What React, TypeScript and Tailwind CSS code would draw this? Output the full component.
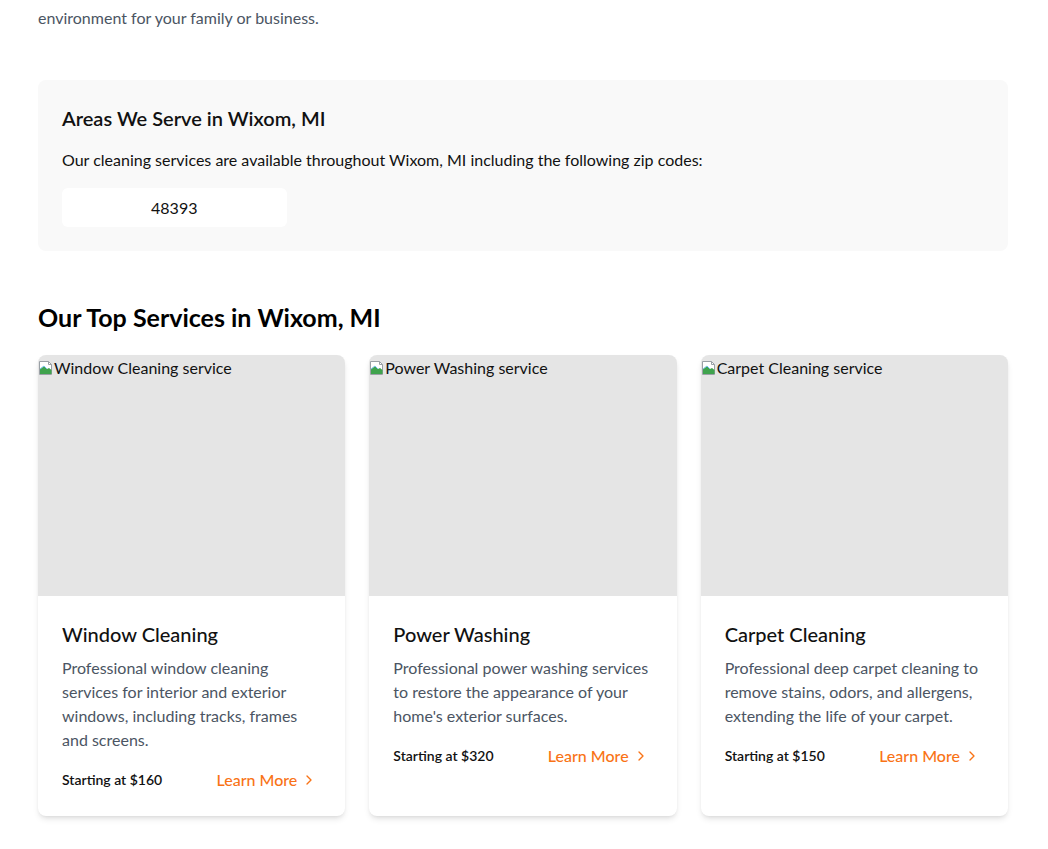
import { ChevronRight } from 'lucide-react';

type Service = {
  name: string;
  description: string;
  price: string;
};

const services: Service[] = [
  {
    name: 'Window Cleaning',
    description:
      'Professional window cleaning services for interior and exterior windows, including tracks, frames and screens.',
    price: '$160',
  },
  {
    name: 'Power Washing',
    description: "Professional power washing services to restore the appearance of your home's exterior surfaces.",
    price: '$320',
  },
  {
    name: 'Carpet Cleaning',
    description: 'Professional deep carpet cleaning to remove stains, odors, and allergens, extending the life of your carpet.',
    price: '$150',
  },
];

const zipCodes = ['48393'];

// stand-in for the broken <img> placeholder
function BrokenImage({ alt }: { alt: string }) {
  return (
    <div className="h-[241px] bg-[#e5e5e5] flex items-start">
      <span className="flex items-center text-base leading-6 text-[#111] pt-[1px]">
        <svg width="16" height="16" viewBox="0 0 16 16" className="shrink-0">
          <path d="M1.5 1.5h9l3 3v10h-12z" fill="#fff" stroke="#9aa0a6" />
          <path d="M10.5 1.5v3h3" fill="none" stroke="#9aa0a6" />
          <path d="M2 9l4-3 3 3 2-1 2.5 2V14H2z" fill="#3fa34d" />
          <path d="M2 9l4-3 3 3" fill="none" stroke="#7cc4ea" />
        </svg>
        {alt}
      </span>
    </div>
  );
}

function ServiceCard({ service }: { service: Service }) {
  return (
    <div className="bg-white rounded-lg overflow-hidden shadow-md flex flex-col">
      <BrokenImage alt={`${service.name} service`} />
      <div className="px-6 pt-6 pb-6">
        <h3 className="text-xl font-medium text-[#111] leading-7 mb-2">{service.name}</h3>
        <p className="text-[#4b5563] leading-6">{service.description}</p>
        <div className="flex flex-row items-center justify-between mt-4">
          <span className="text-sm font-semibold text-[#111]">Starting at {service.price}</span>
          <a href="#" className="flex items-center gap-1 text-[#f97316] font-medium pr-1">
            Learn More
            <ChevronRight size={16} strokeWidth={2} />
          </a>
        </div>
      </div>
    </div>
  );
}

export default function App() {
  return (
    <div className="bg-white min-h-screen pl-[38px] pr-[40px] pb-8" style={{ fontFamily: 'Lato, "Noto Sans", sans-serif' }}>
      <p className="text-[#4b5563] leading-6 pt-[6px]">environment for your family or business.</p>

      <div className="mt-[50px] bg-[#f9f9f9] rounded-lg p-6">
        <h2 className="text-xl font-semibold text-[#111] leading-7 mb-4">Areas We Serve in Wixom, MI</h2>
        <p className="text-[#111] leading-6 mb-4">
          Our cleaning services are available throughout Wixom, MI including the following zip codes:
        </p>
        <div className="grid grid-cols-4 gap-2">
          {zipCodes.map((zip) => (
            <div key={zip} className="bg-white rounded-md h-[39px] flex items-center justify-center text-[#111]">
              {zip}
            </div>
          ))}
        </div>
      </div>

      <h2 className="mt-[50px] text-[25px] font-bold text-black leading-8 mb-[22px]">Our Top Services in Wixom, MI</h2>
      <div className="grid grid-cols-3 gap-6">
        {services.map((service) => (
          <ServiceCard key={service.name} service={service} />
        ))}
      </div>
    </div>
  );
}
